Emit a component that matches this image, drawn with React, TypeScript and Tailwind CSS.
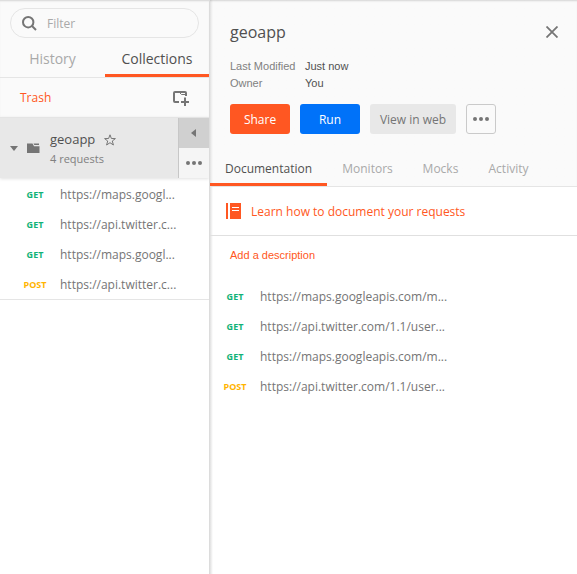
import React from "react";

const SANS = "font-['Open_Sans',sans-serif]";
const ARIAL = "font-['Liberation_Sans',Arial,sans-serif]";

type Request = { method: "GET" | "POST"; short: string; long: string };

const requests: Request[] = [
  { method: "GET", short: "https://maps.googl...", long: "https://maps.googleapis.com/m..." },
  { method: "GET", short: "https://api.twitter.c...", long: "https://api.twitter.com/1.1/user..." },
  { method: "GET", short: "https://maps.googl...", long: "https://maps.googleapis.com/m..." },
  { method: "POST", short: "https://api.twitter.c...", long: "https://api.twitter.com/1.1/user..." },
];

function Method({ method }: { method: Request["method"] }) {
  const color = method === "GET" ? "text-[#10b277]" : "text-[#ffb400]";
  return <span className={`w-[50px] shrink-0 text-center text-[9px] font-bold ${color}`}>{method}</span>;
}

function Dots() {
  return (
    <svg width="16" height="4" viewBox="0 0 16 4" fill="#757575">
      <circle cx="2" cy="2" r="2" />
      <circle cx="8" cy="2" r="2" />
      <circle cx="14" cy="2" r="2" />
    </svg>
  );
}

function Sidebar() {
  return (
    <aside className="flex w-[209px] shrink-0 flex-col bg-white">
      <div className="flex h-[117px] flex-col bg-[#fafafa] shadow-[inset_0_2px_2px_-1px_rgba(0,0,0,0.15)]">
        <div className="mt-2 ml-[10px] flex h-[30px] w-[189px] shrink-0 items-center rounded-full border border-[#e5e5e5] pl-[11px]">
          <svg width="15" height="15" viewBox="0 0 15 15" fill="none" stroke="#757575" strokeWidth="2">
            <circle cx="6.2" cy="6.2" r="5.2" />
            <path d="M10 10L14 14" />
          </svg>
          <span className="ml-[10px] pt-[2px] text-[12px] text-[#a9a9a9]">Filter</span>
        </div>
        <div className="flex h-[39px] shrink-0 text-[14px]">
          <div className="flex w-[105px] items-center justify-center pt-[2px] text-[#a9a9a9]">History</div>
          <div className="flex w-[104px] items-center justify-center border-b-[3px] border-[#ff5722] pt-[5px] text-[#505050]">Collections</div>
        </div>
        <div className="flex flex-1 items-center justify-between border-t border-[#e5e5e5] pr-5 pl-5">
          <span className="text-[12px] text-[#ff5722]">Trash</span>
          <svg width="17" height="16" viewBox="0 0 17 16" fill="none" stroke="#757575" strokeWidth="2" className="mt-[1px]">
            <path d="M7 12H3Q2 12 2 11V3Q2 2 3 2H13Q14 2 14 3V6" />
            <path d="M7.5 2.5L9.5 4.5H13.5" strokeWidth="1" />
            <path d="M13 7.5V16M9 12H17" />
          </svg>
        </div>
      </div>
      <div className="flex h-[61px] shrink-0 border-t border-[#e4e4e4] bg-[#e8e8e8] shadow-[0_1px_3px_rgba(0,0,0,0.12)]">
        <div className="flex w-[178px] items-center">
          <svg width="8" height="5" viewBox="0 0 8 5" fill="#757575" className="ml-[10px]">
            <path d="M0 0H8L4 5Z" />
          </svg>
          <svg width="13" height="11" viewBox="0 0 13 11" fill="#757575" className="ml-[9px]">
            <path d="M0 .5H5.5L7 3.2H12.5V10H0Z" />
            <path d="M6.5 0.5H12V2H7.3Z" />
          </svg>
          <div className="ml-[10px] flex flex-col pt-[2px]">
            <div className="flex h-5 items-center gap-[9px]">
              <span className="text-[13px] text-[#505050]">geoapp</span>
              <svg width="12" height="12" viewBox="0 0 12 12" fill="none" stroke="#757575" strokeWidth="1">
                <path d="M6 .8L7.4 4.5L11.4 4.6L8.3 7L9.4 11L6 8.7L2.6 11L3.7 7L.6 4.6L4.6 4.5Z" />
              </svg>
            </div>
            <span className="text-[11px] leading-[18px] text-[#808080]">4 requests</span>
          </div>
        </div>
        <div className="flex w-[31px] flex-col border-l border-[#c7c7c7]">
          <div className="flex h-[30px] items-center justify-center bg-[#d0d0d0]">
            <svg width="5" height="8" viewBox="0 0 5 8" fill="#757575" className="-ml-[2px]"><path d="M5 0V8L0 4Z" /></svg>
          </div>
          <div className="flex h-[30px] items-center justify-center bg-[#f5f5f5]"><Dots /></div>
        </div>
      </div>
      <div className="flex h-[122px] shrink-0 flex-col border-b border-[#e5e5e5] pt-[2px]">
        {requests.map((r, i) => (
          <div key={i} className="flex h-[30px] shrink-0 items-center pl-[10px] text-[12px] text-[#757575]">
            <Method method={r.method} />
            <span>{r.short}</span>
          </div>
        ))}
      </div>
    </aside>
  );
}

function Details() {
  return (
    <main className="flex flex-1 flex-col border-l border-[#dcdcdc] bg-white">
      <div className="flex flex-1 flex-col bg-linear-to-r from-black/12 to-transparent to-[3px]">
        <div className="flex h-[187px] flex-col bg-linear-to-r from-[#e4e4e4] to-[#fafafa] to-[3px] shadow-[inset_0_2px_2px_-1px_rgba(0,0,0,0.15)]">
          <div className="flex items-center justify-between pt-[19px] pr-[19px] pl-5">
            <h1 className="text-[16px] leading-[26px] text-[#505050]">geoapp</h1>
            <svg width="12" height="12" viewBox="0 0 12 12" stroke="#757575" strokeWidth="1.8"><path d="M.5 .5L11.5 11.5M11.5 .5L.5 11.5" /></svg>
          </div>
          <div className={`mt-[13px] grid grid-cols-[75px_1fr] pl-5 text-[11px] leading-[17px] text-[#808080] ${ARIAL}`}>
            <span>Last Modified</span>
            <span className="text-[#505050]">Just now</span>
            <span>Owner</span>
            <span className="text-[#505050]">You</span>
          </div>
          <div className="mt-[12px] flex gap-[10px] pl-5 text-[12px]">
            <button className="h-[30px] w-[60px] rounded-[3px] bg-[#ff5722] pt-[2px] text-white">Share</button>
            <button className="h-[30px] w-[60px] rounded-[3px] bg-[#0072f9] pt-[2px] text-white">Run</button>
            <button className="h-[30px] w-[86px] rounded-[3px] bg-[#e8e8e8] pt-[2px] text-[#757575]">View in web</button>
            <button className="flex h-[30px] w-[30px] items-center justify-center rounded-[3px] border border-[#cacaca]"><Dots /></button>
          </div>
          <div className="mt-[18px] flex flex-1 border-b border-[#e5e5e5] text-[12px] text-[#a9a9a9]">
            <div className="flex w-[117px] items-center justify-center border-b-[3px] border-[#ff5722] pt-[2px] text-[#505050]">Documentation</div>
            <div className="flex w-[81px] items-center justify-center">Monitors</div>
            <div className="flex w-[65px] items-center justify-center">Mocks</div>
            <div className="flex w-[71px] items-center justify-center">Activity</div>
          </div>
        </div>
        <div className="flex h-[49px] items-center border-b border-[#e0e0e0] pl-4 text-[#ff5722]">
          <svg width="15" height="16" viewBox="0 0 15 16" fill="#ff5722">
            <path d="M0 0H2V16H0ZM4 0H15V16H4Z" />
            <path d="M6 4.5H13M6 7.5H13" stroke="#fff" />
          </svg>
          <span className="ml-[10px] pt-[2px] text-[12px]">Learn how to document your requests</span>
        </div>
        <div className={`mt-[11px] pl-5 text-[11px] leading-[17px] text-[#ff5722] ${ARIAL}`}>Add a description</div>
        <div className="mt-[18px]">
          {requests.map((r, i) => (
            <div key={i} className="flex h-[30px] items-center text-[12px] text-[#757575]">
              <Method method={r.method} />
              <span>{r.long}</span>
            </div>
          ))}
        </div>
      </div>
    </main>
  );
}

export default function App() {
  return (
    <div className={`flex h-[574px] w-[577px] overflow-hidden bg-white ${SANS}`}>
      <Sidebar />
      <Details />
    </div>
  );
}
